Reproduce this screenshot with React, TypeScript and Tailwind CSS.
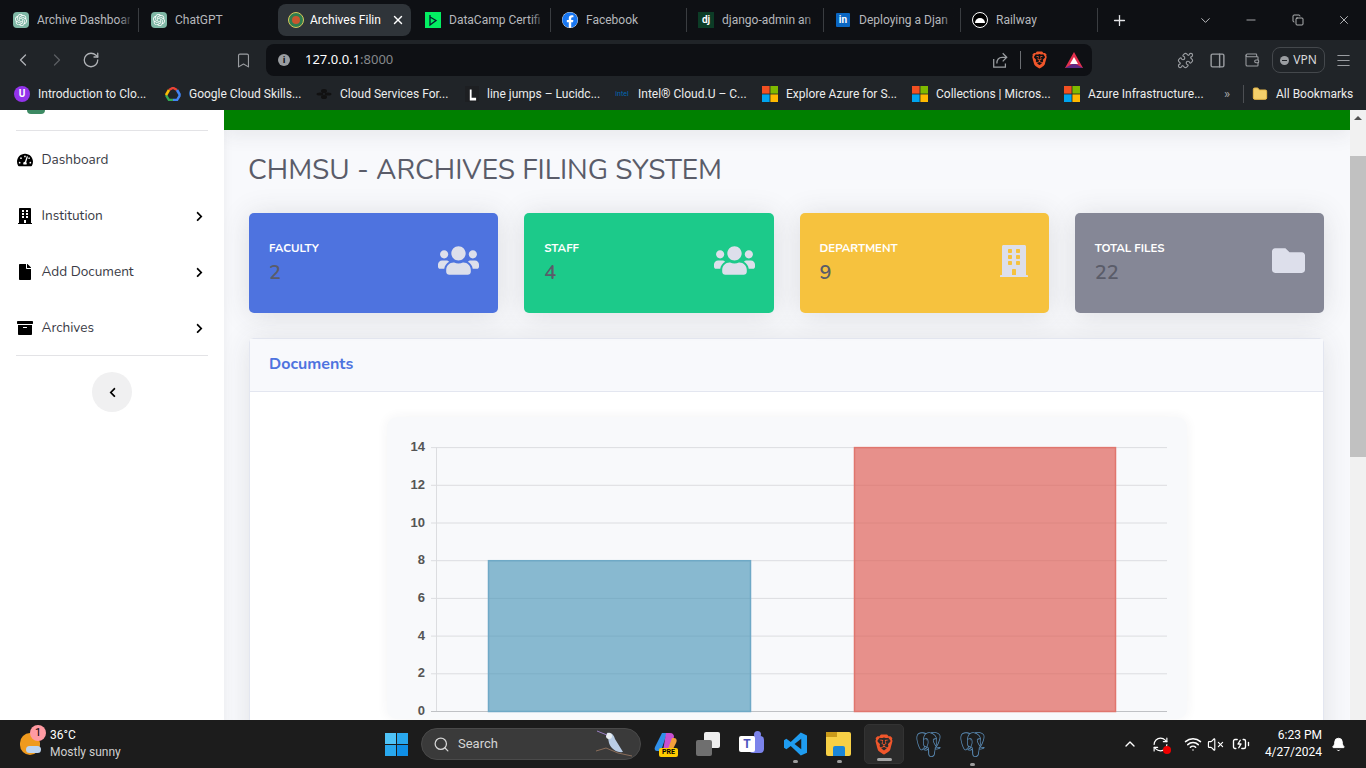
import React from 'react';
import {
  FaArchive, FaBuilding, FaChevronLeft, FaChevronRight, FaFacebook, FaFile, FaFolder,
  FaTachometerAlt, FaUsers,
} from 'react-icons/fa';
import { SiBrave, SiOpenai, SiPostgresql } from 'react-icons/si';
import {
  ChevronDown, ChevronLeft, ChevronRight, ChevronUp, Bell, Menu, Minus, Plus, Puzzle, RotateCw,
  Search, Bookmark, Copy, VolumeX, Wifi, Wallet, X, RefreshCw, PanelRight, Folder, BatteryCharging,
} from 'lucide-react';

const MsLogo = ({ size = 16 }: { size?: number }) => (
  <svg width={size} height={size} viewBox="0 0 16 16" className="shrink-0">
    <rect width="7.6" height="7.6" fill="#f25022" />
    <rect x="8.4" width="7.6" height="7.6" fill="#7fba00" />
    <rect y="8.4" width="7.6" height="7.6" fill="#00a4ef" />
    <rect x="8.4" y="8.4" width="7.6" height="7.6" fill="#ffb900" />
  </svg>
);

const GptIcon = () => (
  <span className="w-4 h-4 rounded-[4px] bg-[#7fb8a6] flex items-center justify-center shrink-0">
    <SiOpenai className="w-3 h-3 text-white" />
  </span>
);

const tabs = [
  { title: 'Archive Dashboar', icon: <GptIcon />, cls: 'w-[137px] border-r' },
  { title: 'ChatGPT', icon: <GptIcon />, cls: 'w-[137px] ml-px' },
  {
    title: 'Archives Filin',
    active: true,
    cls: 'w-[133px] ml-[1px] mr-[3px] pl-[10px]',
    icon: (
      <span className="w-4 h-4 rounded-full bg-[#2f7d4f] border border-[#d7c85a] flex items-center justify-center shrink-0">
        <span className="w-2 h-2 rounded-full bg-[#c9562e]" />
      </span>
    ),
  },
  {
    title: 'DataCamp Certifi',
    cls: 'w-[137px] border-r',
    icon: (
      <span className="w-4 h-4 bg-[#03ef62] flex items-center justify-center shrink-0">
        <svg width="10" height="13" viewBox="0 0 10 13" fill="none" stroke="#05192d" strokeWidth="1.3"><path d="M2 1v10l2-1.500M2 3l6 3.500L4 9.500" /></svg>
      </span>
    ),
  },
  { title: 'Facebook', cls: 'w-[136px] border-r', icon: <FaFacebook className="w-4 h-4 text-[#1877f2] bg-white rounded-full shrink-0" /> },
  {
    title: 'django-admin an',
    cls: 'w-[137px] border-r',
    icon: <span className="w-4 h-4 bg-[#0c3c26] text-white text-[10px] font-bold leading-4 text-center shrink-0">dj</span>,
  },
  {
    title: 'Deploying a Djan',
    cls: 'w-[137px] border-r',
    icon: <span className="w-[14px] h-[14px] mx-px rounded-[1px] bg-[#0a66c2] text-white text-[10px] font-bold leading-[14px] text-center shrink-0">in</span>,
  },
  {
    title: 'Railway',
    cls: 'w-[137px] border-r',
    icon: (
      <span className="w-4 h-4 rounded-full bg-black border border-white flex items-center justify-center shrink-0">
        <span className="w-[10px] h-[5px] rounded-t-full bg-white" />
      </span>
    ),
  },
];

const GoogleCloud = () => (
  <svg width="16" height="14" viewBox="0 0 16 14" className="shrink-0">
    <path d="M4 3 8 0.8 12 3" fill="none" stroke="#ea4335" strokeWidth="2.4" />
    <path d="M12 3 15 8" fill="none" stroke="#4285f4" strokeWidth="2.6" />
    <path d="M15 8 12 13H8" fill="none" stroke="#4285f4" strokeWidth="2.4" />
    <path d="M8 13H4L1 8" fill="none" stroke="#34a853" strokeWidth="2.4" />
    <path d="M1 8 4 3" fill="none" stroke="#fbbc05" strokeWidth="2.6" />
  </svg>
);

const bookmarks = [
  {
    title: 'Introduction to Clo...',
    cls: 'w-[151px]',
    icon: <span className="w-4 h-4 rounded-full bg-[#9333ea] text-white text-[10px] font-bold leading-4 text-center shrink-0">U</span>,
  },
  { title: 'Google Cloud Skills...', cls: 'w-[151px]', icon: <GoogleCloud /> },
  {
    title: 'Cloud Services For...',
    cls: 'w-[149px]',
    icon: (
      <svg width="16" height="12" viewBox="0 0 16 12" className="shrink-0" fill="#111">
        <ellipse cx="8" cy="3" rx="3" ry="2" /><ellipse cx="4" cy="6" rx="3.5" ry="1.6" /><ellipse cx="12" cy="6" rx="3.5" ry="1.6" /><ellipse cx="8" cy="9" rx="3" ry="2" />
      </svg>
    ),
  },
  {
    title: 'line jumps – Lucidc...',
    cls: 'w-[149px]',
    icon: (
      <span className="w-[14px] h-4 bg-[#1d1f22] flex items-end justify-center shrink-0">
        <svg width="9" height="14" viewBox="0 0 10 14" fill="#fff"><path d="M2 1h2v9h5v3H2z" /></svg>
      </span>
    ),
  },
  {
    title: 'Intel® Cloud.U – C...',
    cls: 'w-[148px]',
    icon: <span className="w-4 text-[#0068b5] text-[7px] leading-4 text-center shrink-0">intel</span>,
  },
  { title: 'Explore Azure for S...', cls: 'w-[150px]', icon: <MsLogo /> },
  { title: 'Collections | Micros...', cls: 'w-[152px]', icon: <MsLogo /> },
  { title: 'Azure Infrastructure...', cls: 'w-[135px]', icon: <MsLogo /> },
];

const navItems = [
  { label: 'Dashboard', Icon: FaTachometerAlt },
  { label: 'Institution', Icon: FaBuilding, more: true },
  { label: 'Add Document', Icon: FaFile, more: true },
  { label: 'Archives', Icon: FaArchive, more: true },
];

const stats = [
  { label: 'FACULTY', value: '2', bg: 'bg-[#4e73df]', Icon: FaUsers, icon: 'w-[41px] h-[41px]' },
  { label: 'STAFF', value: '4', bg: 'bg-[#1cca8a]', Icon: FaUsers, icon: 'w-[41px] h-[41px]' },
  { label: 'DEPARTMENT', value: '9', bg: 'bg-[#f6c23e]', Icon: FaBuilding, icon: 'w-[32px] h-[32px]' },
  { label: 'TOTAL FILES', value: '22', bg: 'bg-[#858796]', Icon: FaFolder, icon: 'w-[33px] h-[33px]' },
];

const yTicks = [0, 2, 4, 6, 8, 10, 12, 14];

function BarChart() {
  // plot area in the card's own coordinates
  const y = (v: number) => 294 - v * 18.85;
  return (
    <svg width="800" height="302" viewBox="0 0 800 302" className="block">
      {yTicks.map((t) => (
        <g key={t}>
          <line x1="44" x2="780" y1={y(t) + 0.5} y2={y(t) + 0.5} stroke={t === 0 ? '#bfc1c5' : '#dcdde0'} />
          <text x="38" y={y(t) + 4} textAnchor="end" fontSize="13" fontWeight="700" fill="#555" fontFamily="'Liberation Sans', sans-serif">{t}</text>
        </g>
      ))}
      <line x1="49.5" x2="49.5" y1={y(14)} y2={y(0)} stroke="#dcdde0" />
      <rect x="101.5" y={y(8) + 0.5} width="262" height={8 * 18.85} fill="rgba(75,150,185,0.65)" stroke="#6fa9c6" strokeWidth="1.5" />
      <rect x="467.5" y={y(14) + 0.5} width="261" height={14 * 18.85} fill="rgba(222,95,85,0.68)" stroke="#e0766e" strokeWidth="1.5" />
    </svg>
  );
}

function Sidebar() {
  return (
    <aside className="w-[224px] shrink-0 bg-white flex flex-col items-center">
      <div className="w-[192px] h-[21px] border-b border-[#e3e3e6] relative">
        <span className="absolute left-[11px] top-0 w-[18px] h-1 rounded-b-full bg-[#3d8a63]" />
      </div>
      <nav className="w-full">
        {navItems.map(({ label, Icon, more }) => (
          <div key={label} className="h-[56px] pt-[2px] flex items-center pl-[17px] pr-[19px] text-[13.6px] text-[#3a3b45]">
            <Icon className="w-[16px] h-[16px] text-black shrink-0" />
            <span className="ml-[8.5px] flex-1">{label}</span>
            {more && <FaChevronRight className="w-[11px] h-[11px] text-black" />}
          </div>
        ))}
      </nav>
      <div className="w-[192px] border-t border-[#e3e3e6]" />
      <div className="mt-4 w-10 h-10 rounded-full bg-[#f0f0f1] flex items-center justify-center">
        <FaChevronLeft className="w-[11px] h-[11px] text-black" />
      </div>
    </aside>
  );
}

function Main() {
  return (
    <main className="flex-1 min-w-0 bg-[#f8f9fc] overflow-hidden shadow-[inset_8px_0_10px_-8px_rgba(58,59,69,0.08)]">
      <div className="h-5 bg-[#008000] shadow-[0_4px_20px_rgba(58,59,69,0.1)]" />
      <div className="pl-[25px] pr-[26px]">
        <h1 className="mt-[21px] -ml-px h-[38px] text-[28px] leading-[38px] text-[#5a5c69]">CHMSU - ARCHIVES FILING SYSTEM</h1>
        <div className="mt-[24px] grid grid-cols-4 gap-[26px]">
          {stats.map(({ label, value, bg, Icon, icon }) => (
            <div key={label} className={`${bg} h-[100px] rounded-[5px] pl-5 pr-[19px] flex items-center justify-between shadow-[0_2px_28px_rgba(58,59,69,0.15)]`}>
              <div className="-mt-[1px]">
                <div className="text-[11.5px] leading-[16px] font-bold text-white">{label}</div>
                <div className="mt-[5px] text-[20px] leading-[24px] font-semibold text-[#5a5c69]">{value}</div>
              </div>
              <Icon className={`${icon} mb-[5px] text-[#dddfeb]`} />
            </div>
          ))}
        </div>
        <section className="mt-[25px] rounded-[5px] border border-[#e3e6f0] bg-white shadow-[0_2px_28px_rgba(58,59,69,0.12)]">
          <div className="h-[53px] pb-[3px] bg-[#f8f9fc] border-b border-[#e3e6f0] flex items-center pl-[19px] text-[16px] font-bold text-[#4e73df]">Documents</div>
          <div className="pt-[25px] pb-10">
            <div className="w-[800px] ml-[137px] bg-[#f8f9fb] rounded-[10px] shadow-[0_0_12px_rgba(58,59,69,0.06)]">
              <BarChart />
            </div>
          </div>
        </section>
      </div>
    </main>
  );
}

function Scrollbar() {
  return (
    <div className="w-4 shrink-0 bg-[#f1f1f1] flex flex-col items-center">
      <div className="h-[16px] w-full flex items-center justify-center">
        <span className="w-0 h-0 border-x-[4px] border-x-transparent border-b-[4px] border-b-[#505050]" />
      </div>
      <div className="mt-[30px] w-full h-[301px] bg-[#c1c1c1]" />
    </div>
  );
}

function BrowserChrome() {
  return (
    <header className="shrink-0 text-[#e3e4e6]">
      <div className="h-10 bg-[#0e1014] flex items-center pl-[2px] font-['Roboto',sans-serif]">
        {tabs.map((t) => (
          <div key={t.title} className={`${t.cls} relative flex items-center text-[12px] border-[#3a3d41] ${t.active ? 'gap-[6px] h-8 bg-[#2f3439] rounded-lg text-white pr-[6px]' : 'gap-2 h-6 pl-[11px] pr-2 text-[#b6b8bc]'}`}>
            {t.icon}
            <span className="flex-1 min-w-0 whitespace-nowrap overflow-hidden">{t.title}</span>
            {t.active ? (
              <X className="w-[14px] h-[14px] shrink-0" strokeWidth={2.4} />
            ) : (
              <span className="absolute right-1 top-0 w-4 h-full bg-gradient-to-r from-transparent to-[#0e1014]" />
            )}
          </div>
        ))}
        <Plus className="ml-[13px] w-[17px] h-[17px]" strokeWidth={1.8} />
        <ChevronDown className="ml-[70px] w-[15px] h-[15px]" strokeWidth={1.3} />
        <Minus className="ml-[31px] w-[14px] h-[14px]" strokeWidth={1.2} />
        <Copy className="ml-[34px] w-[12px] h-[12px]" strokeWidth={1.5} />
        <X className="ml-[33px] w-[14px] h-[14px]" strokeWidth={1.3} />
      </div>
      <div className="h-10 bg-[#202428] flex items-center">
        <ChevronLeft className="ml-[13px] w-[20px] h-[20px] text-[#b0b3b7]" strokeWidth={1.5} />
        <ChevronRight className="ml-[14px] w-[20px] h-[20px] text-[#5b5f63]" strokeWidth={1.5} />
        <RotateCw className="ml-[15px] w-[18px] h-[18px] text-[#b0b3b7]" strokeWidth={1.7} />
        <Bookmark className="ml-[135px] w-[17px] h-[17px] text-[#9a9da1]" strokeWidth={1.6} />
        <div className="ml-[14px] w-[826px] h-8 bg-[#0e1014] rounded-lg flex items-center pl-[12px] pr-[9px]">
          <span className="w-3 h-3 rounded-full bg-[#9a9da1] text-[#0e1014] text-[9px] font-bold leading-3 text-center">i</span>
          <span className="ml-[15px] text-[13px] text-white">127.0.0.1<span className="text-[#85888c]">:8000</span></span>
          <svg width="18" height="18" viewBox="0 0 20 20" fill="none" stroke="#9a9da1" strokeWidth="1.4" className="ml-auto">
            <path d="M13 2.500 17.500 7 13 11.500M17 7h-4.500C9 7 6.500 9.500 6.500 14M3 9v9h13v-4" />
          </svg>
          <span className="ml-[11px] w-px h-[18px] bg-[#6b6e72]" />
          <SiBrave className="ml-[10px] w-[17px] h-[18px] text-[#f1562b]" />
          <svg width="18" height="16" viewBox="0 0 18 16" className="ml-[17px]">
            <path d="M9 0 18 16H0z" fill="#e2304d" />
            <path d="M0 16 9 11l9 5z" fill="#5e2a84" />
            <path d="M9 5 13 12H5z" fill="#fff" />
          </svg>
        </div>
        <Puzzle className="ml-[85px] w-[17px] h-[17px] text-[#9a9da1]" strokeWidth={1.6} />
        <PanelRight className="ml-[15px] w-[17px] h-[17px] text-[#9a9da1]" strokeWidth={2} />
        <Wallet className="ml-[18px] w-[16px] h-[16px] text-[#9a9da1]" strokeWidth={1.6} />
        <div className="ml-[12px] w-[53px] h-[26px] rounded-lg border border-[#44484c] flex items-center justify-center gap-1 text-[12px] text-[#d7d8da]">
          <span className="w-[9px] h-[9px] rounded-full bg-[#9a9da1] flex items-center justify-center"><span className="w-[5px] h-px bg-[#202428]" /></span>
          VPN
        </div>
        <Menu className="ml-[10px] w-[17px] h-[17px] text-[#9a9da1]" strokeWidth={1.6} />
      </div>
      <div className="h-[30px] pb-[2px] bg-[#202428] flex items-center pl-[14px] text-[12px] text-[#eceded] font-['Roboto',sans-serif]">
        {bookmarks.map((b) => (
          <div key={b.title} className={`${b.cls} flex items-center gap-2 whitespace-nowrap shrink-0`}>
            {b.icon}
            <span>{b.title}</span>
          </div>
        ))}
        <span className="ml-[25px] w-[8px] text-[#a5a7aa] text-[13px]">»</span>
        <span className="ml-[11px] w-px h-[18px] bg-[#4c4f53]" />
        <Folder className="ml-[8px] w-4 h-4 text-[#e8b94a] fill-[#f3cf6b]" strokeWidth={1.5} />
        <span className="ml-2 whitespace-nowrap">All Bookmarks</span>
      </div>
    </header>
  );
}

function Taskbar() {
  return (
    <footer className="h-12 shrink-0 bg-[#1c1c1c] flex items-center text-white text-[12px] font-['Roboto',sans-serif]">
      <div className="ml-[20px] w-[22px] h-[22px] relative shrink-0">
        <span className="block w-[20px] h-[22px] rounded-full bg-[#ef9a1e]" />
        <span className="absolute left-[6px] bottom-[2px] w-[15px] h-[7px] rounded-full bg-[#bcd4f0]" />
        <span className="absolute left-[10px] -top-[8px] w-[16px] h-[16px] rounded-full bg-[#ff9aa2] text-black text-[11px] leading-4 text-center">1</span>
      </div>
      <div className="ml-[8px] w-[95px] leading-[17px]">
        <div>36°C</div>
        <div className="text-[#d0d0d0]">Mostly sunny</div>
      </div>
      <svg width="23" height="23" viewBox="0 0 23 23" className="ml-[240px]">
        <rect width="11" height="11" fill="#4fc3f7" />
        <rect x="12" width="11" height="11" fill="#29a8ee" />
        <rect y="12" width="11" height="11" fill="#29a8ee" />
        <rect x="12" y="12" width="11" height="11" fill="#0f8fe6" />
      </svg>
      <div className="ml-[13px] w-[220px] h-8 rounded-full bg-[#3a3a3a] border border-[#4a4a4a] flex items-center pl-[11px] text-[13px] text-[#d5d5d5]">
        <Search className="w-[17px] h-[17px]" strokeWidth={1.8} />
        <span className="ml-[8px]">Search</span>
        <svg width="40" height="28" viewBox="0 0 40 28" className="ml-auto mr-[6px]">
          <path d="M2 21 12 18l12 5 14 3" stroke="#8a6d5a" strokeWidth="1" fill="none" />
          <path d="M13 3c4-1 7 2 8 6l8 13c-6 1-12-3-14-9z" fill="#b9cde6" />
          <circle cx="15" cy="6" r="3" fill="#e9eef2" />
          <path d="M13 5 3 1" stroke="#9b7fc4" strokeWidth="1" />
        </svg>
      </div>
      <div className="ml-[13px] w-6 h-6 relative shrink-0">
        <svg width="24" height="20" viewBox="0 0 24 20">
          <path d="M8 1h5L7 19H3C1 19 0 17 1 15z" fill="#2f8fe8" />
          <path d="M12 1h4c3 0 4 2 4 4l-6 14H9z" fill="#c84fd0" />
          <path d="M18 6h2c3 0 3 3 2 5l-3 6h-5z" fill="#f3a03c" />
        </svg>
        <span className="absolute left-[5px] -bottom-[1px] w-[19px] h-[9px] rounded-[2px] bg-[#ffcc00] text-black text-[7px] font-bold leading-[9px] text-center">PRE</span>
      </div>
      <div className="ml-[18px] w-6 h-6 relative shrink-0">
        <span className="absolute right-0 top-0 w-[16px] h-[16px] rounded-[2px] bg-[#efefef]" />
        <span className="absolute left-0 bottom-0 w-[16px] h-[16px] rounded-[2px] bg-[#6f6f6f]" />
      </div>
      <div className="ml-[19px] w-[25px] h-6 relative shrink-0">
        <span className="absolute right-0 top-[4px] w-[15px] h-[17px] rounded-[4px] bg-[#7b83eb]" />
        <span className="absolute right-[3px] -top-[1px] w-[7px] h-[7px] rounded-full bg-[#7b83eb]" />
        <span className="absolute left-0 top-[4px] w-[16px] h-[16px] rounded-[2px] bg-white text-[#4b53bc] text-[12px] font-bold leading-4 text-center">T</span>
      </div>
      <div className="ml-[20px] w-[23px] relative shrink-0 flex flex-col items-center">
        <svg width="23" height="24" viewBox="0 0 24 24">
          <path d="M17.5 0 24 3v18l-6.5 3L7 14l-4.5 3.5L0 16V8l2.500-1.500L7 10z" fill="#1f9cf0" />
          <path d="M18 6.500 11 12l7 5.500z" fill="#1c1c1c" />
        </svg>
        <span className="absolute -bottom-[7px] w-[5px] h-[3px] rounded-full bg-[#9d9d9d]" />
      </div>
      <div className="ml-[19px] w-[25px] h-6 relative shrink-0 rounded-[2px] bg-[#f7d046]">
        <span className="absolute left-0 top-0 w-[11px] h-[5px] bg-[#c99a1a]" />
        <span className="absolute left-[7px] bottom-0 w-[12px] h-[10px] rounded-t-[2px] bg-[#1a86d8]" />
        <span className="absolute left-[11px] -bottom-[7px] w-[5px] h-[3px] rounded-full bg-[#9d9d9d]" />
      </div>
      <div className="ml-[13px] w-10 h-10 rounded-[5px] bg-[#2b2b2b] border border-[#333] relative flex items-center justify-center shrink-0">
        <SiBrave className="w-[20px] h-[23px] text-[#f1562b]" />
        <span className="absolute bottom-[2px] w-[15px] h-[3px] rounded-full bg-[#a5a5a5]" />
      </div>
      <SiPostgresql className="ml-[12px] w-[25px] h-[25px] text-[#5b8db8] shrink-0" />
      <div className="ml-[19px] w-[25px] relative shrink-0 flex justify-center">
        <SiPostgresql className="w-[25px] h-[25px] text-[#5b8db8]" />
        <span className="absolute -bottom-[9px] w-[5px] h-[3px] rounded-full bg-[#9d9d9d]" />
      </div>
      <ChevronUp className="ml-[137px] w-[16px] h-[16px]" strokeWidth={2} />
      <div className="ml-[14px] relative shrink-0">
        <RefreshCw className="w-[17px] h-[17px]" strokeWidth={1.6} />
        <span className="absolute right-[-2px] bottom-[-1px] w-2 h-2 rounded-full bg-[#f00000]" />
      </div>
      <Wifi className="ml-[15px] w-[18px] h-[18px]" strokeWidth={2} />
      <VolumeX className="ml-[5px] w-[17px] h-[17px]" strokeWidth={1.6} />
      <BatteryCharging className="ml-[8px] w-[18px] h-[18px]" strokeWidth={1.8} />
      <div className="ml-[11px] w-[61px] text-right leading-[17px] whitespace-nowrap">
        <div>6:23 PM</div>
        <div>4/27/2024</div>
      </div>
      <Bell className="ml-[9px] w-[15px] h-[15px] fill-white" strokeWidth={1.5} />
    </footer>
  );
}

export default function App() {
  return (
    <div className="h-screen w-full flex flex-col overflow-hidden bg-white font-['Noto_Sans',sans-serif]">
      <BrowserChrome />
      <div className="flex-1 min-h-0 flex overflow-hidden font-['Nunito','Lato',sans-serif]">
        <Sidebar />
        <Main />
        <Scrollbar />
      </div>
      <Taskbar />
    </div>
  );
}
